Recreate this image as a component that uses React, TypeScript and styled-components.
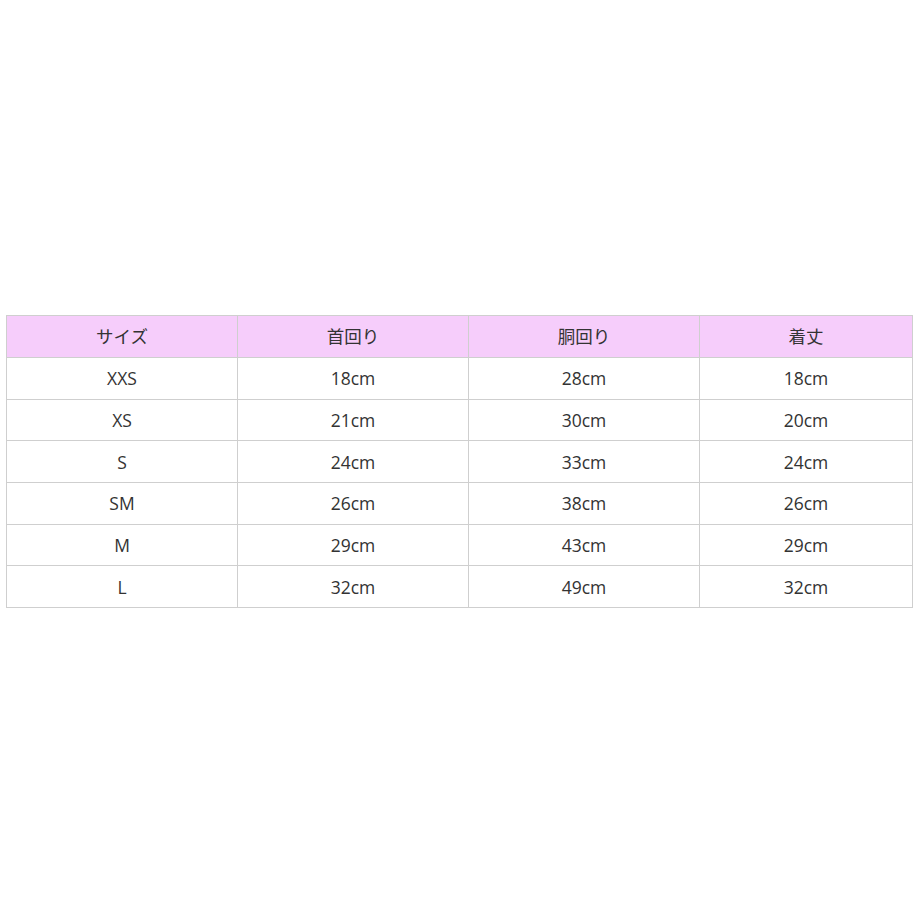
import React from "react";
import styled, { createGlobalStyle } from "styled-components";

const GlobalStyle = createGlobalStyle`
  html, body {
    margin: 0;
    padding: 0;
    background: #ffffff;
  }
  body {
    font-family: "Open Sans", "Noto Sans CJK JP", sans-serif;
    color: #333333;
  }
`;

type Row = {
  size: string;
  neck: string;
  body: string;
  length: string;
};

const headers = ["サイズ", "首回り", "胴回り", "着丈"];

const rows: Row[] = [
  { size: "XXS", neck: "18cm", body: "28cm", length: "18cm" },
  { size: "XS", neck: "21cm", body: "30cm", length: "20cm" },
  { size: "S", neck: "24cm", body: "33cm", length: "24cm" },
  { size: "SM", neck: "26cm", body: "38cm", length: "26cm" },
  { size: "M", neck: "29cm", body: "43cm", length: "29cm" },
  { size: "L", neck: "32cm", body: "49cm", length: "32cm" },
];

const App = () => {
  return (
    <Page>
      <GlobalStyle />
      <SizeTable>
        <colgroup>
          <Col $width={231} />
          <Col $width={231} />
          <Col $width={231} />
          <Col $width={213} />
        </colgroup>
        <thead>
          <tr>
            {headers.map((h) => (
              <HeadCell key={h}>{h}</HeadCell>
            ))}
          </tr>
        </thead>
        <tbody>
          {rows.map((r) => (
            <tr key={r.size}>
              <Cell>{r.size}</Cell>
              <Cell>{r.neck}</Cell>
              <Cell>{r.body}</Cell>
              <Cell>{r.length}</Cell>
            </tr>
          ))}
        </tbody>
      </SizeTable>
    </Page>
  );
};

const Page = styled.div`
  height: 920px;
  display: flex;
  align-items: center;
  padding: 3px 0 0 6px;
  box-sizing: border-box;
`;

const SizeTable = styled.table`
  width: 907px;
  border-collapse: collapse;
  table-layout: fixed;
  font-size: 17.5px;
`;

const Col = styled.col<{ $width: number }>`
  width: ${(p) => p.$width}px;
`;

const HeadCell = styled.th`
  height: 42px;
  padding: 0 8px;
  background-color: #f6cdfb;
  border: 1px solid #cfcfcf;
  font-weight: 400;
  text-align: center;
  line-height: 20px;
  box-sizing: border-box;
`;

const Cell = styled.td`
  height: 41.7px;
  padding: 0 8px;
  border: 1px solid #cfcfcf;
  text-align: center;
  line-height: 20px;
  box-sizing: border-box;
`;

export default App;
